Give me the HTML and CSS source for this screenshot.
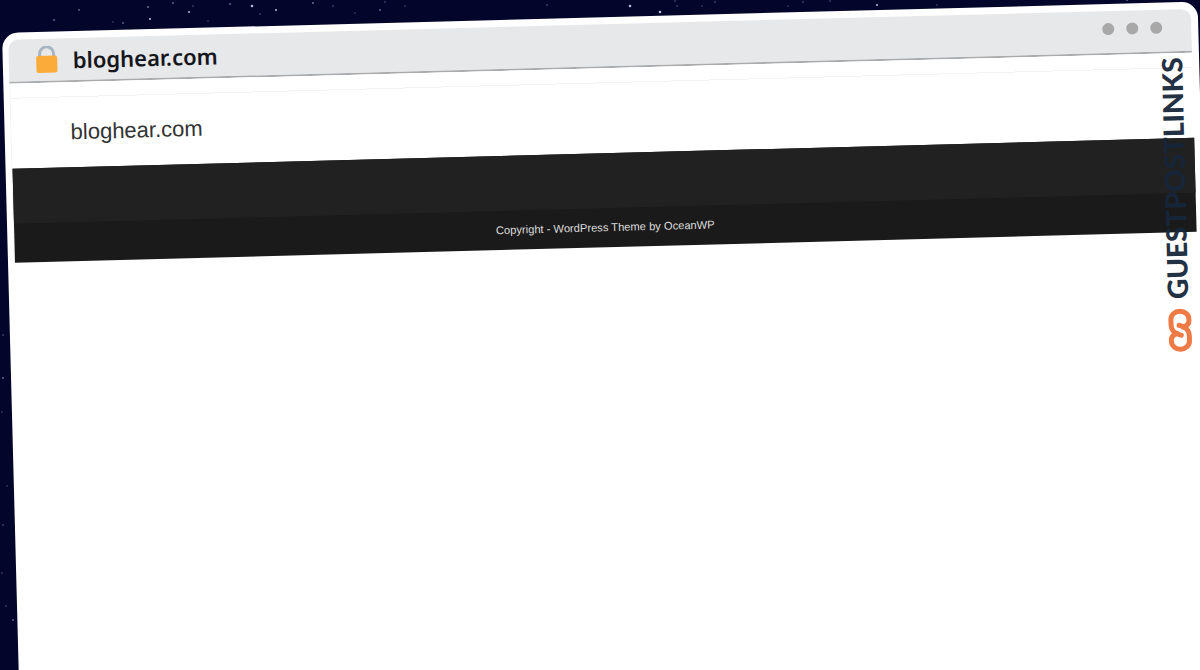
FILE: index.html
```html
<!DOCTYPE html>
<html lang="en">
<head>
    <meta charset="UTF-8">
    <meta name="viewport" content="width=device-width, initial-scale=1.0">
    <title>bloghear.com</title>
    <link rel="stylesheet" href="styles.css">
</head>
<body>
    <svg class="stars" width="1200" height="670" aria-hidden="true">
        <g fill="#b9bcd8">
            <circle cx="252" cy="6" r="1.300"/>
            <circle cx="630" cy="6" r="1.300"/>
            <circle cx="660" cy="12" r="1.300"/>
            <circle cx="877" cy="5" r="1"/>
            <circle cx="189" cy="12" r="1"/>
            <circle cx="276" cy="10" r="1"/>
            <circle cx="150" cy="19" r="1"/>
            <circle cx="148" cy="7" r="0.800"/>
            <circle cx="313" cy="3" r="0.800"/>
            <circle cx="79" cy="10" r="0.700"/>
            <circle cx="123" cy="23" r="0.700"/>
        </g>
        <g fill="#5c608c">
            <circle cx="54" cy="20" r="1"/>
            <circle cx="113" cy="22" r="0.700"/>
            <circle cx="173" cy="3" r="1"/>
            <circle cx="193" cy="6" r="0.800"/>
            <circle cx="208" cy="21" r="0.700"/>
            <circle cx="230" cy="4" r="1"/>
            <circle cx="260" cy="14" r="0.800"/>
            <circle cx="333" cy="6" r="0.800"/>
            <circle cx="355" cy="13" r="0.700"/>
            <circle cx="380" cy="10" r="1"/>
            <circle cx="385" cy="2" r="0.800"/>
            <circle cx="405" cy="6" r="0.700"/>
            <circle cx="547" cy="5" r="0.800"/>
            <circle cx="675" cy="1" r="0.800"/>
            <circle cx="677" cy="6" r="0.800"/>
            <circle cx="702" cy="6" r="0.700"/>
            <circle cx="715" cy="2" r="0.800"/>
            <circle cx="788" cy="6" r="0.700"/>
            <circle cx="803" cy="2" r="0.800"/>
            <circle cx="830" cy="1" r="0.800"/>
            <circle cx="937" cy="5" r="0.700"/>
            <circle cx="1127" cy="0" r="1"/>
            <circle cx="3" cy="335" r="0.800"/>
            <circle cx="3" cy="378" r="1"/>
            <circle cx="2" cy="412" r="0.700"/>
            <circle cx="7" cy="486" r="0.700"/>
            <circle cx="3" cy="525" r="0.800"/>
            <circle cx="2" cy="573" r="0.700"/>
            <circle cx="6" cy="606" r="0.800"/>
            <circle cx="13" cy="620" r="1"/>
        </g>
    </svg>

    <div class="window">
        <div class="topbar">
            <svg class="lock" width="24" height="28" viewBox="0 0 24 28">
                <path d="M5 14V8a7 7 0 0 1 14 0v6" fill="none" stroke="#a9b4c2" stroke-width="3"/>
                <rect x="1.500" y="10" width="21" height="17" rx="2" fill="#fbab3a"/>
            </svg>
            <span class="address">bloghear.com</span>
            <div class="dots">
                <span class="dot"></span>
                <span class="dot"></span>
                <span class="dot"></span>
            </div>
        </div>

        <div class="page">
            <header class="site-header">
                <a class="site-title">bloghear.com</a>
            </header>
            <footer class="site-footer">
                <div class="footer-widgets"></div>
                <div class="footer-bottom">Copyright - WordPress Theme by OceanWP</div>
            </footer>
        </div>

        <div class="badge">
            <span class="badge-text">GUESTPOSTLINKS</span>
            <svg class="chain" width="24" height="44" viewBox="0 0 24 44">
                <g fill="none" stroke="#ee7a45" stroke-width="5" stroke-linecap="round">
                    <path d="M13 27C7 26 3 22 3 16V11a9 8 0 0 1 18 0V13C21 16 18 18 15 19"/>
                    <path d="M11 17C17 18 21 22 21 28V33a9 8 0 0 1 -18 0V31C3 28 6 26 9 25"/>
                </g>
            </svg>
        </div>
    </div>
</body>
</html>
```

FILE: styles.css
```css
body {
    margin: 0;
    overflow: hidden;
    background-color: #03052a;
    font-family: "Liberation Sans", Arial, sans-serif;
}
.stars {
    position: absolute;
    left: 0;
    top: 0;
}
.window {
    position: absolute;
    left: 2px;
    top: 33px;
    width: 1183px;
    height: 665px;
    padding: 7px 7px 0 6px;
    background: white;
    border-radius: 16px 16px 0 0;
    transform: rotate(-1.5deg);
    transform-origin: 0 0;
}
.topbar {
    display: flex;
    align-items: center;
    height: 42px;
    padding: 0 29px 0 26px;
    background-color: #e7e8ea;
    border-bottom: 2px solid #a9abad;
    border-radius: 10px 10px 0 0;
}
.lock {
    margin-right: 14px;
}
.address {
    font-family: "Noto Sans", sans-serif;
    font-size: 22px;
    font-weight: 600;
    color: #15171c;
}
.dots {
    display: flex;
    gap: 12px;
    margin-left: auto;
    padding-bottom: 6px;
}
.dot {
    width: 12px;
    height: 12px;
    border-radius: 50%;
    background-color: #a8a8a8;
}
.page {
    border-left: 1px solid #f2f2f2;
}
.site-header {
    height: 85px;
    padding-left: 59px;
    background: linear-gradient(#fff 14px, #f3f3f3 14px, #f3f3f3 15px, #fff 15px);
}
.site-title {
    display: block;
    padding-top: 35px;
    font-size: 22px;
    line-height: 30px;
    color: #333;
}
.site-footer {
    background-color: #1a1a1a;
    color: #ddd;
}
.footer-widgets {
    height: 55px;
    background-color: #212121;
}
.footer-bottom {
    height: 39px;
    padding-top: 9px;
    box-sizing: border-box;
    font-size: 11.150px;
    line-height: 20px;
    text-align: center;
}
.badge {
    position: absolute;
    right: 14px;
    top: 55px;
    display: flex;
    flex-direction: column;
    align-items: center;
    gap: 9px;
}
.badge-text {
    writing-mode: vertical-rl;
    transform: rotate(180deg);
    font-family: "Lato", sans-serif;
    font-size: 28px;
    font-weight: 900;
    line-height: 28px;
    color: #17263a;
    opacity: 0.95;
}
.chain {
    margin-left: 4px;
}
```
